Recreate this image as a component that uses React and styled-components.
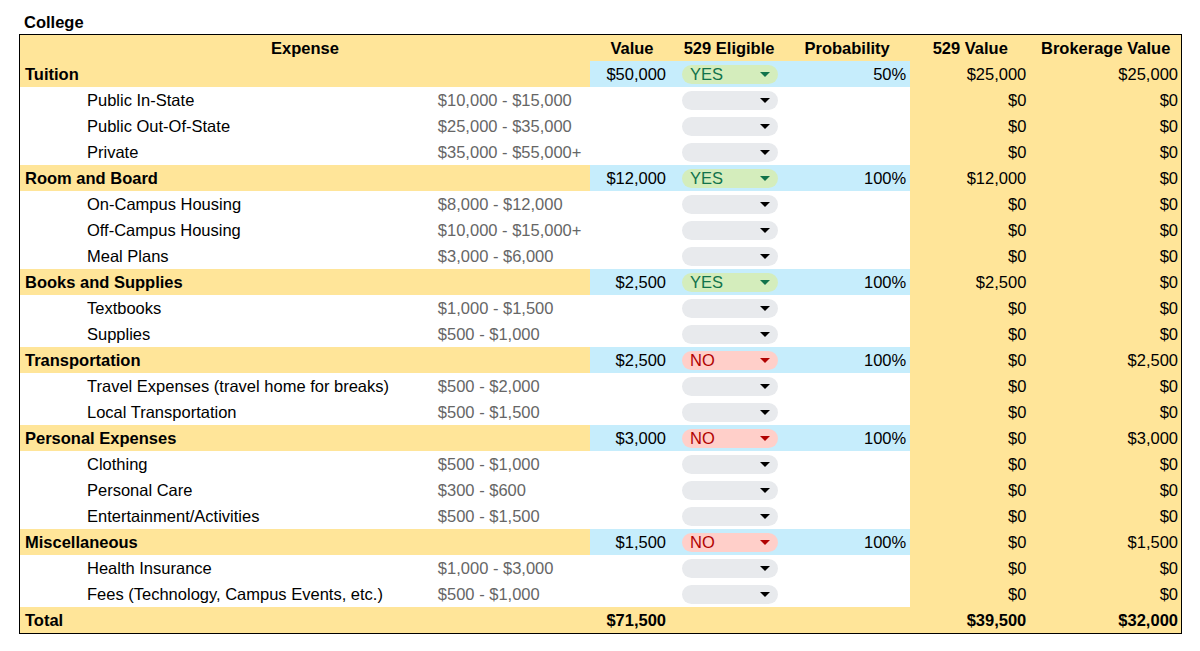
import React from "react";
import styled, { createGlobalStyle } from "styled-components";

const Global = createGlobalStyle`
  html, body { margin: 0; padding: 0; background: #fff; }
  body { font-family: "Liberation Sans", Arial, sans-serif; font-size: 16.5px; color: #000; }
`;

const YELLOW = "#ffe599";
const BLUE = "#c6edfc";

const Page = styled.div`
  padding: 12px 0 0 19px;
`;

const Title = styled.div`
  font-weight: bold;
  line-height: 20px;
  padding-left: 5px;
  margin-bottom: 2px;
`;

const Table = styled.table`
  border-collapse: collapse;
  border: 1px solid #000;
  table-layout: fixed;
  width: 1163px;
`;

const Col = styled.col``;

const Row = styled.tr`
  height: 26px;
`;

const Cell = styled.td`
  height: 26px;
  padding: 0 ${(p) => (p.$pr != null ? p.$pr : 4)}px 0 ${(p) => (p.$pl != null ? p.$pl : 5)}px;
  background: ${(p) => p.$bg || "#fff"};
  text-align: ${(p) => p.$align || "left"};
  font-weight: ${(p) => (p.$bold ? "bold" : "normal")};
  color: ${(p) => (p.$muted ? "#666666" : "#000")};
  white-space: nowrap;
  overflow: hidden;
  line-height: 20px;
  vertical-align: middle;
  box-sizing: border-box;
`;

const HeadCell = styled.th`
  height: 26px;
  padding: 0;
  background: ${YELLOW};
  font-weight: bold;
  text-align: center;
  line-height: 20px;
  white-space: nowrap;
`;

const Chip = styled.div`
  width: 96px;
  height: 19px;
  margin: 0 0 0 8px;
  border-radius: 10px;
  box-sizing: border-box;
  display: flex;
  align-items: center;
  justify-content: space-between;
  padding: 0 8px 0 8px;
  background: ${(p) => (p.$kind === "yes" ? "#d4edbc" : p.$kind === "no" ? "#ffcfc9" : "#e8eaed")};
  color: ${(p) => (p.$kind === "yes" ? "#11734b" : p.$kind === "no" ? "#b10202" : "#000")};
  line-height: 19px;
`;

const Arrow = styled.span`
  width: 0;
  height: 0;
  border-left: 5px solid transparent;
  border-right: 5px solid transparent;
  border-top: 5px solid currentColor;
  margin-left: auto;
`;

function Dropdown({ kind }) {
  return (
    <Chip $kind={kind}>
      <span>{kind === "yes" ? "YES" : kind === "no" ? "NO" : ""}</span>
      <Arrow />
    </Chip>
  );
}

const sections = [
  {
    name: "Tuition", value: "$50,000", elig: "yes", prob: "50%", v529: "$25,000", brok: "$25,000",
    items: [
      ["Public In-State", "$10,000 - $15,000"],
      ["Public Out-Of-State", "$25,000 - $35,000"],
      ["Private", "$35,000 - $55,000+"],
    ],
  },
  {
    name: "Room and Board", value: "$12,000", elig: "yes", prob: "100%", v529: "$12,000", brok: "$0",
    items: [
      ["On-Campus Housing", "$8,000 - $12,000"],
      ["Off-Campus Housing", "$10,000 - $15,000+"],
      ["Meal Plans", "$3,000 - $6,000"],
    ],
  },
  {
    name: "Books and Supplies", value: "$2,500", elig: "yes", prob: "100%", v529: "$2,500", brok: "$0",
    items: [
      ["Textbooks", "$1,000 - $1,500"],
      ["Supplies", "$500 - $1,000"],
    ],
  },
  {
    name: "Transportation", value: "$2,500", elig: "no", prob: "100%", v529: "$0", brok: "$2,500",
    items: [
      ["Travel Expenses (travel home for breaks)", "$500 - $2,000"],
      ["Local Transportation", "$500 - $1,500"],
    ],
  },
  {
    name: "Personal Expenses", value: "$3,000", elig: "no", prob: "100%", v529: "$0", brok: "$3,000",
    items: [
      ["Clothing", "$500 - $1,000"],
      ["Personal Care", "$300 - $600"],
      ["Entertainment/Activities", "$500 - $1,500"],
    ],
  },
  {
    name: "Miscellaneous", value: "$1,500", elig: "no", prob: "100%", v529: "$0", brok: "$1,500",
    items: [
      ["Health Insurance", "$1,000 - $3,000"],
      ["Fees (Technology, Campus Events, etc.)", "$500 - $1,000"],
    ],
  },
];

export default function App() {
  return (
    <>
      <Global />
      <Page>
        <Title>College</Title>
        <Table>
          <colgroup>
            <Col style={{ width: 412 }} />
            <Col style={{ width: 158 }} />
            <Col style={{ width: 84 }} />
            <Col style={{ width: 110 }} />
            <Col style={{ width: 126 }} />
            <Col style={{ width: 120 }} />
            <Col style={{ width: 151 }} />
          </colgroup>
          <tbody>
            <Row>
              <HeadCell colSpan={2}>Expense</HeadCell>
              <HeadCell>Value</HeadCell>
              <HeadCell>529 Eligible</HeadCell>
              <HeadCell>Probability</HeadCell>
              <HeadCell>529 Value</HeadCell>
              <HeadCell>Brokerage Value</HeadCell>
            </Row>
            {sections.map((s) => (
              <React.Fragment key={s.name}>
                <Row>
                  <Cell $bg={YELLOW} $bold>{s.name}</Cell>
                  <Cell $bg={YELLOW} />
                  <Cell $bg={BLUE} $align="right" $pr={8}>{s.value}</Cell>
                  <Cell $bg={BLUE} $pl={0} $pr={0}><Dropdown kind={s.elig} /></Cell>
                  <Cell $bg={BLUE} $align="right">{s.prob}</Cell>
                  <Cell $bg={YELLOW} $align="right">{s.v529}</Cell>
                  <Cell $bg={YELLOW} $align="right" $pr={3}>{s.brok}</Cell>
                </Row>
                {s.items.map(([n, r]) => (
                  <Row key={n}>
                    <Cell $pl={67}>{n}</Cell>
                    <Cell $pl={6} $muted>{r}</Cell>
                    <Cell />
                    <Cell $pl={0} $pr={0}><Dropdown kind="none" /></Cell>
                    <Cell />
                    <Cell $bg={YELLOW} $align="right">$0</Cell>
                    <Cell $bg={YELLOW} $align="right" $pr={3}>$0</Cell>
                  </Row>
                ))}
              </React.Fragment>
            ))}
            <Row>
              <Cell $bg={YELLOW} $bold>Total</Cell>
              <Cell $bg={YELLOW} />
              <Cell $bg={YELLOW} $bold $align="right" $pr={8}>$71,500</Cell>
              <Cell $bg={YELLOW} />
              <Cell $bg={YELLOW} />
              <Cell $bg={YELLOW} $bold $align="right">$39,500</Cell>
              <Cell $bg={YELLOW} $bold $align="right" $pr={3}>$32,000</Cell>
            </Row>
          </tbody>
        </Table>
      </Page>
    </>
  );
}
